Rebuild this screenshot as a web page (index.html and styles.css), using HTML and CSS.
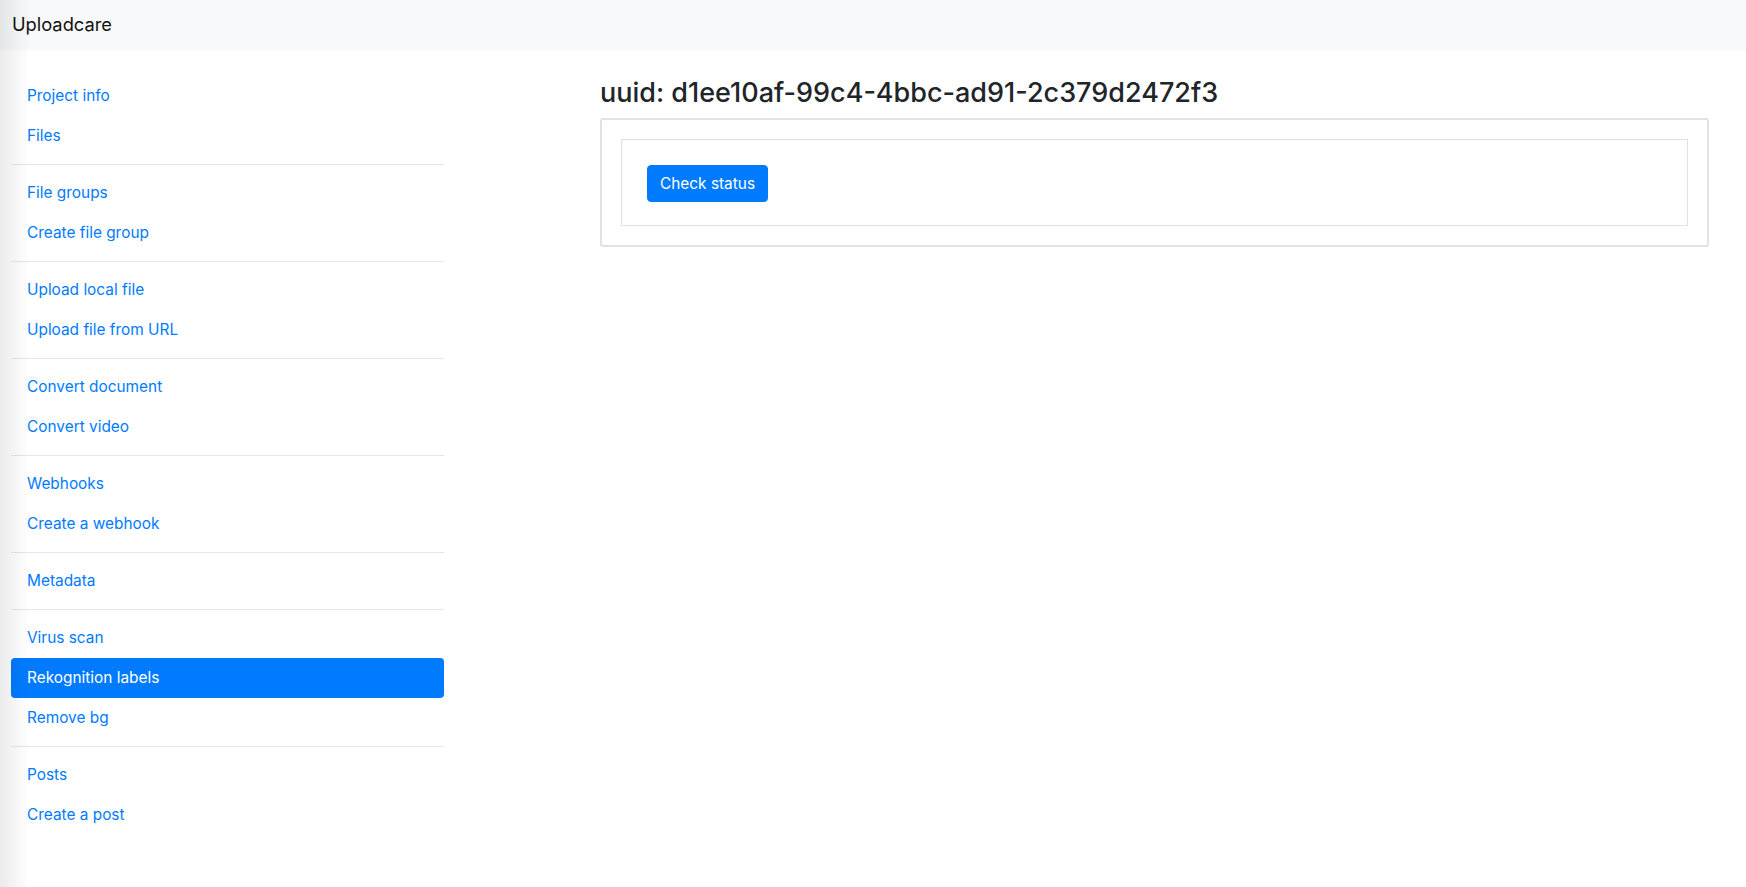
FILE: index.html
```html
<!DOCTYPE html>
<html lang="en">
<head>
<meta charset="utf-8">
<title>Uploadcare</title>
<link rel="stylesheet" href="styles.css">
</head>
<body>
<div class="edge-shade"></div>
<nav class="navbar"><a class="brand" href="#">Uploadcare</a></nav>
<div class="layout">
  <aside class="sidebar">
    <ul class="nav">
      <li><a class="nav-link" href="#">Project info</a></li>
      <li><a class="nav-link" href="#">Files</a></li>
      <li class="divider"></li>
      <li><a class="nav-link" href="#">File groups</a></li>
      <li><a class="nav-link" href="#">Create file group</a></li>
      <li class="divider"></li>
      <li><a class="nav-link" href="#">Upload local file</a></li>
      <li><a class="nav-link" href="#">Upload file from URL</a></li>
      <li class="divider"></li>
      <li><a class="nav-link" href="#">Convert document</a></li>
      <li><a class="nav-link" href="#">Convert video</a></li>
      <li class="divider"></li>
      <li><a class="nav-link" href="#">Webhooks</a></li>
      <li><a class="nav-link" href="#">Create a webhook</a></li>
      <li class="divider"></li>
      <li><a class="nav-link" href="#">Metadata</a></li>
      <li class="divider"></li>
      <li><a class="nav-link" href="#">Virus scan</a></li>
      <li><a class="nav-link active" href="#">Rekognition labels</a></li>
      <li><a class="nav-link" href="#">Remove bg</a></li>
      <li class="divider"></li>
      <li><a class="nav-link" href="#">Posts</a></li>
      <li><a class="nav-link" href="#">Create a post</a></li>
    </ul>
  </aside>
  <main class="main">
    <h3 class="title">uuid: d1ee10af-99c4-4bbc-ad91-2c379d2472f3</h3>
    <div class="card">
      <div class="panel">
        <button class="btn" type="button">Check status</button>
      </div>
    </div>
  </main>
</div>
</body>
</html>
```

FILE: styles.css
```css
html, body {
  margin: 0;
  padding: 0;
}
body {
  font-family: Inter, "Liberation Sans", Arial, sans-serif;
  font-size: 16px;
  line-height: 24px;
  color: #212529;
  background: #fff;
  min-height: 887px;
}
.edge-shade {
  position: fixed;
  top: 0;
  left: 0;
  bottom: 0;
  width: 30px;
  background: linear-gradient(to right, rgba(0,0,0,0.08), rgba(0,0,0,0));
  pointer-events: none;
  z-index: 10;
}
.navbar {
  height: 50px;
  background: #f8f9fa;
  display: flex;
  align-items: center;
  padding: 0 12px;
}
.brand {
  font-size: 18.3px;
  color: #111;
  text-decoration: none;
  line-height: 28px;
  margin-top: -3px;
}
.layout {
  display: flex;
  padding-top: 26px;
}
.sidebar {
  width: 433px;
  margin-left: 11px;
  flex: none;
}
.nav {
  list-style: none;
  margin: 0;
  padding: 0;
}
.nav-link {
  display: block;
  padding: 8px 16px;
  font-size: 15.4px;
  line-height: 24px;
  color: #007bff;
  text-decoration: none;
  border-radius: 4px;
}
.nav-link.active {
  background: #007bff;
  color: #fff;
}
.divider {
  height: 1px;
  background: #e6e6e6;
  margin: 8px 0;
}
.main {
  margin-left: 156px;
  width: 1109px;
  flex: none;
}
.title {
  margin: 0 0 8px 0;
  font-size: 27px;
  font-weight: 500;
  line-height: 34px;
  color: #212529;
}
.card {
  border: 2px solid #e2e2e2;
  border-radius: 3px;
  padding: 19px;
}
.panel {
  border: 1px solid #dee2e6;
  padding: 24px;
  padding-top: 25px;
  padding-bottom: 23px;
}
.btn {
  font-family: inherit;
  font-size: 15.4px;
  line-height: 24px;
  padding: 6px 12px;
  height: 37px;
  background: #007bff;
  color: #fff;
  border: 1px solid #007bff;
  border-radius: 4px;
  margin-left: 1px;
}
```
